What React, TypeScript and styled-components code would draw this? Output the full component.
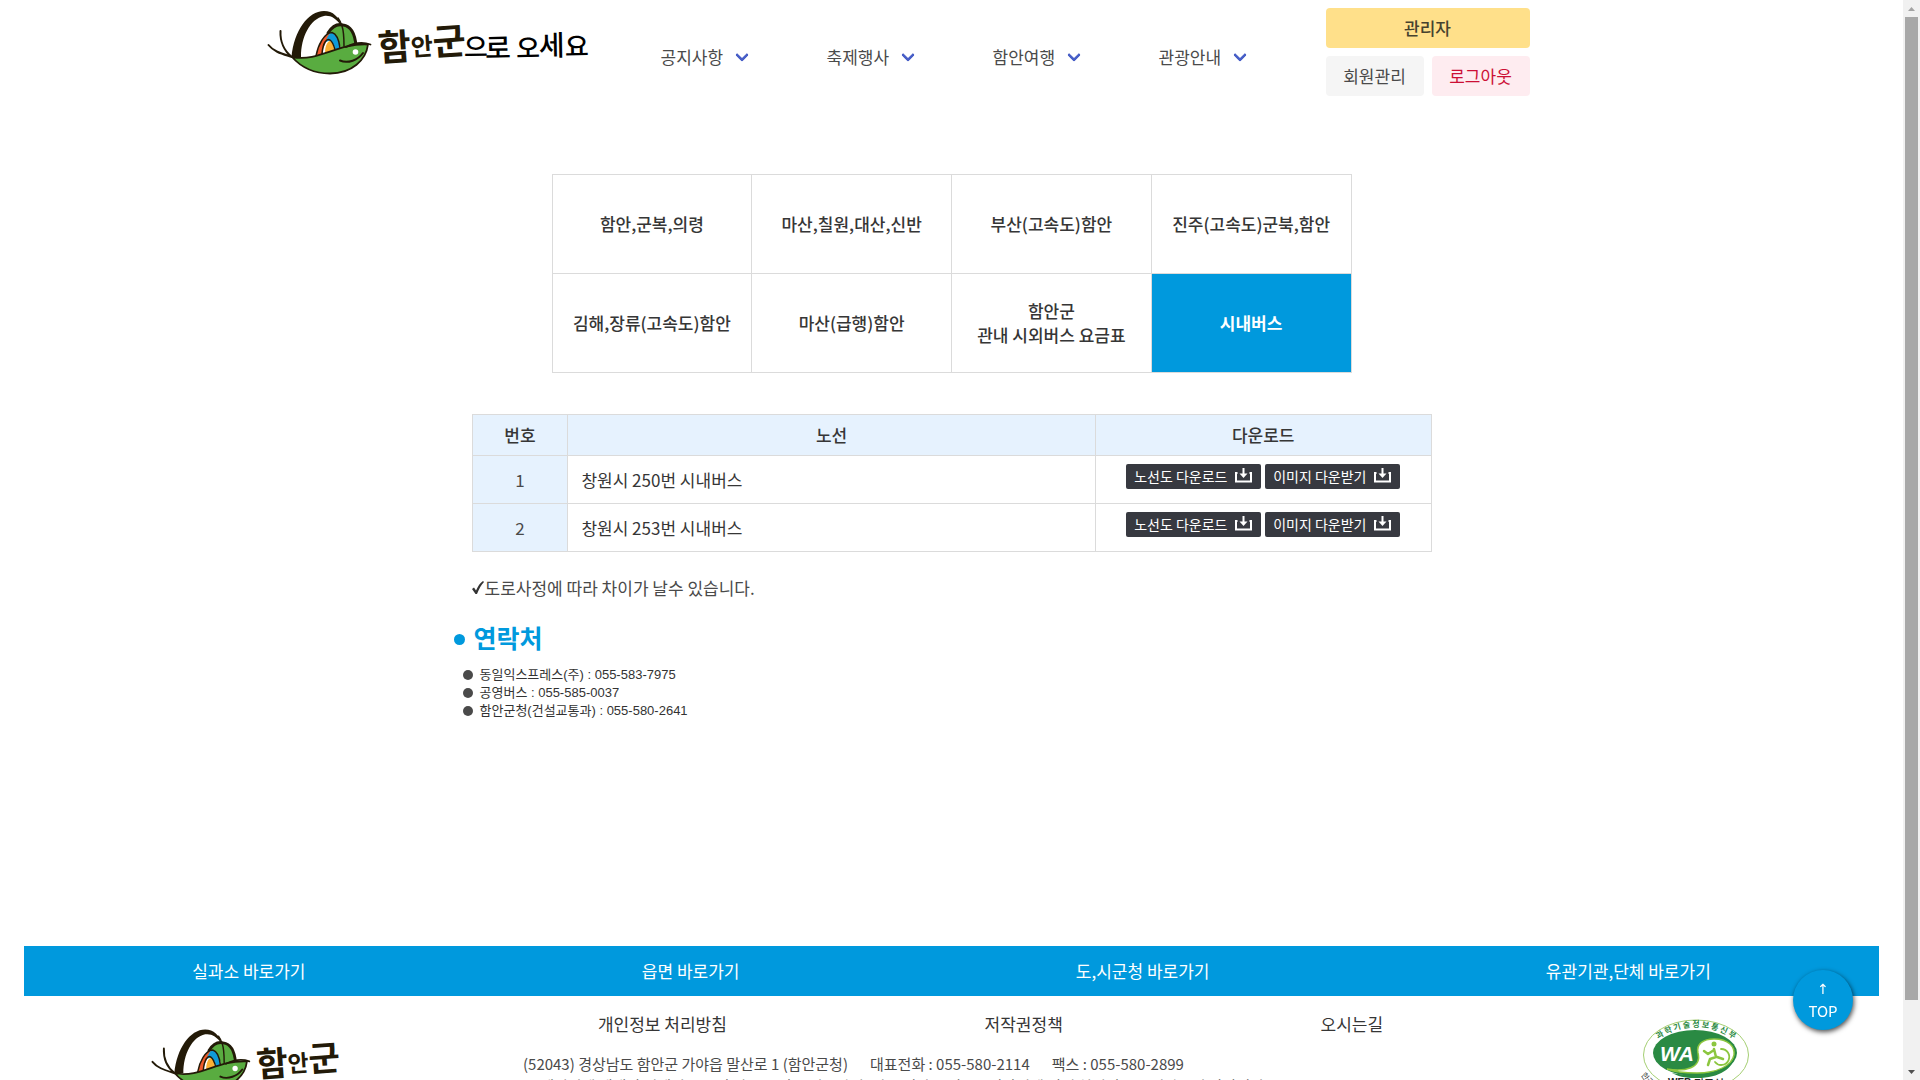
import React from 'react';
import styled, { createGlobalStyle } from 'styled-components';

const BLUE = '#0099dd';
const SANS = '"Noto Sans CJK KR", "Open Sans", sans-serif';

const GlobalStyle = createGlobalStyle`
  * { box-sizing: border-box; margin: 0; padding: 0; }
  html, body, #root { height: 100%; }
  body { background: #fff; color: #4a4a4a; font-family: ${SANS}; font-size: 17px; line-height: 24px; overflow: hidden; }
  a { color: inherit; text-decoration: none; }
  ul { list-style: none; }
  button { font: inherit; border: 0; cursor: pointer; }
`;

const Frame = styled.div`
  display: grid;
  grid-template-columns: 1fr 17px;
  height: 100vh;
`;

const Page = styled.div`
  min-width: 0;
  overflow-y: auto;
  scrollbar-width: none;
  &::-webkit-scrollbar { display: none; }
`;

const ScrollTrack = styled.div`
  display: flex;
  flex-direction: column;
  align-items: center;
  background: #f1f1f1;
`;

const ScrollArrow = styled.svg`
  flex: none;
  width: 17px;
  height: 17px;
`;

const ScrollSpace = styled.div`
  flex: 1;
  width: 13px;
`;

const ScrollThumb = styled.div`
  height: 94%;
  background: #a8a8a8;
`;

const Header = styled.header`
  display: flex;
  align-items: flex-start;
  max-width: 1376px;
  margin: 0 auto;
`;

const HomeLink = styled.a`
  display: block;
  margin-right: 67px;
`;

const LogoSvg = styled.svg`
  display: block;
  overflow: visible;
`;

const Nav = styled.nav`
  display: flex;
  height: 114px;
  align-items: center;
`;

const NavLink = styled.a`
  display: flex;
  align-items: center;
  gap: 14px;
  width: 166px;
`;

const Chevron = styled.span`
  width: 10px;
  height: 10px;
  margin-top: -4px;
  border: solid #485fc7;
  border-width: 0 3px 3px 0;
  border-radius: 2px;
  transform: rotate(45deg);
`;

const Account = styled.div`
  display: grid;
  grid-template-columns: 98px 98px;
  gap: 8px;
  padding: 8px 0 0 1px;
`;

const AccountButton = styled.button<{ $bg: string; $fg: string; $wide?: boolean }>`
  grid-column: ${(p) => (p.$wide ? 'span 2' : 'auto')};
  height: 40px;
  border-radius: 4px;
  background: ${(p) => p.$bg};
  color: ${(p) => p.$fg};
  font-weight: ${(p) => (p.$wide ? 500 : 400)};
`;

const Main = styled.main`
  max-width: 1000px;
  margin: 0 auto;
  padding: 60px 0 226px;
`;

const Tabs = styled.nav`
  display: grid;
  grid-template-columns: repeat(4, 1fr);
  grid-auto-rows: 99px;
  max-width: 800px;
  margin: 0 auto 41px;
  border-top: 1px solid #dbdbdb;
  border-left: 1px solid #dbdbdb;
`;

const Tab = styled.a<{ $active?: boolean }>`
  display: flex;
  align-items: center;
  justify-content: center;
  text-align: center;
  white-space: pre-line;
  border-right: 1px solid #dbdbdb;
  border-bottom: 1px solid #dbdbdb;
  font-weight: ${(p) => (p.$active ? 700 : 500)};
  color: ${(p) => (p.$active ? '#fff' : '#363636')};
  background: ${(p) => (p.$active ? BLUE : '#fff')};
`;

const Routes = styled.table`
  width: 96%;
  margin: 0 auto;
  border-collapse: collapse;
  table-layout: fixed;
  th, td { border: 1px solid #dbdbdb; }
`;

const HeadCell = styled.th<{ $width: string }>`
  width: ${(p) => p.$width};
  height: 41px;
  background: #e6f2fe;
  color: #363636;
  font-weight: 500;
`;

const NumberCell = styled.td`
  height: 48px;
  background: #e6f2fe;
  text-align: center;
`;

const RouteCell = styled.td`
  padding: 0 13px;
  color: #363636;
`;

const Downloads = styled.div`
  display: flex;
  justify-content: center;
  gap: 4px;
  padding-bottom: 6px;
`;

const DownloadButton = styled.button`
  display: flex;
  align-items: center;
  justify-content: space-between;
  width: 135px;
  height: 25px;
  padding: 0 9px 2px 8px;
  border-radius: 2px;
  background: #373940;
  color: #fff;
  font-size: 14px;
  white-space: nowrap;
`;

const Notice = styled.p`
  display: flex;
  align-items: center;
  gap: 1px;
  padding: 24px 20px 23px;
`;

const ContactTitle = styled.h2`
  display: flex;
  align-items: center;
  gap: 9px;
  padding-left: 2px;
  line-height: 28px;
  font-size: 25px;
  font-weight: 700;
  color: ${BLUE};
  &::before {
    content: '';
    width: 11px;
    height: 11px;
    margin-top: 4px;
    border-radius: 50%;
    background: ${BLUE};
  }
`;

const Contacts = styled.ul`
  padding: 15px 0 0 11px;
`;

const Contact = styled.li`
  display: flex;
  align-items: center;
  gap: 7px;
  font: 13px/18px "Liberation Sans", ${SANS};
  color: #333;
  &::before {
    content: '';
    width: 10px;
    height: 10px;
    border-radius: 50%;
    background: #4a4a4a;
  }
`;

const Footer = styled.footer`
  padding: 0 24px 60px;
`;

const Shortcuts = styled.nav`
  display: flex;
  justify-content: space-around;
  align-items: center;
  height: 50px;
  background: ${BLUE};
  color: #fff;
`;

const FooterBody = styled.div`
  display: grid;
  grid-template-columns: 445fr 1043fr 367fr;
`;

const FooterSide = styled.div`
  display: flex;
  justify-content: center;
  align-items: flex-start;
  padding-top: 23px;
`;

const Policies = styled.nav`
  display: flex;
  justify-content: space-around;
  padding-top: 16px;
  color: #363636;
`;

const Address = styled.address`
  padding: 17px 0 0 54px;
  font-size: 15px;
  line-height: 22px;
  font-style: normal;
`;

const AddressLine = styled.p`
  display: flex;
  gap: 22px;
  white-space: nowrap;
`;

const TopButton = styled.button`
  position: fixed;
  right: 67px;
  bottom: 50px;
  width: 60px;
  height: 60px;
  border-radius: 50%;
  background: ${BLUE};
  color: #fff;
  font-size: 15px;
  line-height: 22px;
  box-shadow: 1px 2px 5px rgba(0, 0, 0, 0.7);
`;

const Arrow = styled.span`
  display: block;
  font: 14px/22px "DejaVu Sans", sans-serif;
`;

const INK = '#231a08';

function Turtle() {
  return (
    <g strokeLinecap="round" strokeLinejoin="round">
      <path d="M31.500 57C34 31 48 11 64 11C73 11 79 17 81.500 26C76 18 70 15 64 16C50 19 41 37 41 57Z" fill={INK} />
      <path d="M78 18C81 22 83 29 83 35" fill="none" stroke={INK} strokeWidth="1.500" />
      <path d="M68 33C73 25 79 24 83 25C91 26 95 34 96 46L81 50C80 42 77 34 68 33Z" fill="#59ac40" />
      <path d="M68 33C73 25 79 24 83 25C91 26 95 34 96 46" fill="none" stroke={INK} strokeWidth="3" />
      <path d="M82 26C84 32 84 38 84 46" fill="none" stroke={INK} strokeWidth="1.500" />
      <path d="M56 56C58 45 63 35 70 33L66 42C64 46 62 50 62 54Z" fill="#ee5a2b" />
      <path d="M66 41C68 34 71 32 73 33C77 35 79 40 80 48L75 50C74 43 71 39 66 42Z" fill="#0f9ad8" />
      <path d="M65 53C65 45 68 41 70 41C73 42 74 46 74 51Z" fill="#fbb034" />
      <path d="M56 56C58 45 64 33 72 32.500C77 34 79 40 80 48M62 54C63 42 67 38 70 40C73 42 74 46 75 50" fill="none" stroke={INK} strokeWidth="1.500" />
      <path d="M32 57C60 62 76 43 108 44.500C106 60 92 73.500 70 73.500C52 73.500 40 66 32 57Z" fill="#59ac40" stroke={INK} strokeWidth="1.800" />
      <path d="M86 47C94 43 103 42 110.500 44.500" fill="none" stroke={INK} strokeWidth="1.800" />
      <path d="M80 60.500C88 64 98 60 103 53" fill="none" stroke={INK} strokeWidth="2" />
      <circle cx="95.500" cy="52" r="2.800" fill="#fff" />
      <path d="M8.500 45C14 52 23 54 32 57M20.500 31C20 41 24 51 32 57" fill="none" stroke={INK} strokeWidth="2" />
    </g>
  );
}

function Logo({ full }: { full?: boolean }) {
  return (
    <LogoSvg
      viewBox={full ? '4 0 330 84' : '8 0 199 84'}
      width={full ? 330 : 189}
      height={full ? 84 : 80}
      role="img"
      aria-label={full ? '함안군으로 오세요' : '함안군'}
    >
      <Turtle />
      <g fontFamily='"Noto Sans CJK KR", sans-serif' fontWeight="700" fill={INK}>
        <text transform="rotate(-4 136 50)">
          <tspan x="118" y="60" fontSize="36">함</tspan>
          <tspan x="151" y="57" fontSize="24">안</tspan>
          <tspan x="173" y="58" fontSize="36">군</tspan>
        </text>
        {full && (
          <text fill="#000" fontWeight="500" transform="rotate(-1 260 50)">
            <tspan x="204" y="56" fontSize="26">으</tspan>
            <tspan x="225" y="58" fontSize="28">로</tspan>
            <tspan x="256" y="58" fontSize="26">오</tspan>
            <tspan x="279" y="56" fontSize="28">세</tspan>
            <tspan x="305" y="57" fontSize="26">요</tspan>
          </text>
        )}
      </g>
    </LogoSvg>
  );
}

function DownloadIcon() {
  return (
    <svg width="17" height="15" viewBox="0 0 17 15" fill="none" stroke="#fff" aria-hidden="true">
      <path d="M2.500 5H1V13.500H16V5H14.500" strokeWidth="2" />
      <path d="M8.500 0V7" strokeWidth="2" />
      <path d="M4.500 5.500H12.500L8.500 10Z" fill="#fff" stroke="none" />
    </svg>
  );
}

function WebAccessibilityMark() {
  return (
    <svg width="114" height="76" viewBox="0 0 114 76" role="img" aria-label="WA 웹 접근성 인증마크">
      <defs>
        <path id="mark-top" d="M16 22Q57 -6 98 22" />
        <path id="mark-left" d="M2 56Q10 69 26 77" />
        <path id="mark-right" d="M88 77Q104 70 113 55" />
      </defs>
      <ellipse cx="57" cy="36" rx="52.500" ry="35" fill="#fff" stroke="#a5cf73" />
      <ellipse cx="56" cy="34" rx="42" ry="23" fill="#2a8a43" />
      <path d="M59 34C57 25 64 20 75 20C90 20 96 28 95 36C93 47 78 54 58 54C46 54 36 53 28 50C46 53 63 49 59 34Z" fill="#fff" stroke="#8cc63f" strokeWidth="1.500" />
      <path d="M33 54C56 59 92 54 96 36C95 50 78 60 56 59C46 59 38 57 33 54Z" fill="#2a8a43" />
      <circle cx="75" cy="25" r="2.500" fill="#8cc63f" />
      <g fill="none" stroke="#8cc63f" strokeWidth="2.500" strokeLinecap="round" strokeLinejoin="round">
        <path d="M75 30L77 38L71 40L69 46M65 32L69 35L75 31M78 38L84 40" />
        <path d="M82 30A8 8 0 1 1 76 43" strokeWidth="1.800" />
      </g>
      <text x="21" y="42" fontFamily='"Liberation Sans", sans-serif' fontSize="21" fontWeight="700" fontStyle="italic" fill="#fff">WA</text>
      <text fontFamily='"Noto Sans CJK KR", sans-serif' fontSize="8" fontWeight="700" fill="#2a8a43">
        <textPath href="#mark-top" startOffset="50%" textAnchor="middle">과 학 기 술 정 보 통 신 부</textPath>
      </text>
      <text fontFamily='"Noto Sans CJK KR", sans-serif' fontSize="8" fill="#333">
        <textPath href="#mark-left">한국웹</textPath>
      </text>
      <text fontFamily='"Noto Sans CJK KR", sans-serif' fontSize="8" fill="#333">
        <textPath href="#mark-right">2030</textPath>
      </text>
      <text x="57" y="67" textAnchor="middle" fontFamily='"Liberation Sans", sans-serif' fontSize="10" fontWeight="700" fill="#222">WEB 접근성</text>
    </svg>
  );
}

const menu = ['공지사항', '축제행사', '함안여행', '관광안내'];
const tabs = [
  '함안,군복,의령',
  '마산,칠원,대산,신반',
  '부산(고속도)함안',
  '진주(고속도)군북,함안',
  '김해,장류(고속도)함안',
  '마산(급행)함안',
  '함안군\n관내 시외버스 요금표',
  '시내버스',
];
const routes = ['창원시 250번 시내버스', '창원시 253번 시내버스'];
const contacts = [
  '동일익스프레스(주) : 055-583-7975',
  '공영버스 : 055-585-0037',
  '함안군청(건설교통과) : 055-580-2641',
];
const shortcuts = ['실과소 바로가기', '읍면 바로가기', '도,시군청 바로가기', '유관기관,단체 바로가기'];
const policies = ['개인정보 처리방침', '저작권정책', '오시는길'];

export default function App() {
  return (
    <>
      <GlobalStyle />
      <Frame>
        <Page>
          <Header>
            <HomeLink href="#">
              <Logo full />
            </HomeLink>
            <Nav>
              {menu.map((m) => (
                <NavLink href="#" key={m}>
                  {m}
                  <Chevron />
                </NavLink>
              ))}
            </Nav>
            <Account>
              <AccountButton $wide $bg="#ffe08a" $fg="#46422f">관리자</AccountButton>
              <AccountButton $bg="#f5f5f5" $fg="#4a4a4a">회원관리</AccountButton>
              <AccountButton $bg="#feecf0" $fg="#cc0f35">로그아웃</AccountButton>
            </Account>
          </Header>

          <Main>
            <Tabs>
              {tabs.map((t) => (
                <Tab href="#" key={t} $active={t === '시내버스'}>{t}</Tab>
              ))}
            </Tabs>

            <Routes>
              <thead>
                <tr>
                  <HeadCell $width="10%">번호</HeadCell>
                  <HeadCell $width="55%">노선</HeadCell>
                  <HeadCell $width="35%">다운로드</HeadCell>
                </tr>
              </thead>
              <tbody>
                {routes.map((r, i) => (
                  <tr key={r}>
                    <NumberCell>{i + 1}</NumberCell>
                    <RouteCell>{r}</RouteCell>
                    <td>
                      <Downloads>
                        <DownloadButton>노선도 다운로드<DownloadIcon /></DownloadButton>
                        <DownloadButton>이미지 다운받기<DownloadIcon /></DownloadButton>
                      </Downloads>
                    </td>
                  </tr>
                ))}
              </tbody>
            </Routes>

            <Notice>
              <svg width="12" height="14" viewBox="0 0 12 14" aria-hidden="true">
                <path d="M0 8L2 6.500L4 9.500C6 5 8 2 11 0L12 1C9 4 7 8 5 13H3.500Z" fill="#333" />
              </svg>
              도로사정에 따라 차이가 날수 있습니다.
            </Notice>

            <ContactTitle>연락처</ContactTitle>
            <Contacts>
              {contacts.map((c) => (
                <Contact key={c}>{c}</Contact>
              ))}
            </Contacts>
          </Main>

          <Footer>
            <Shortcuts>
              {shortcuts.map((s) => (
                <a href="#" key={s}>{s}</a>
              ))}
            </Shortcuts>
            <FooterBody>
              <FooterSide>
                <Logo />
              </FooterSide>
              <div>
                <Policies>
                  {policies.map((p) => (
                    <a href="#" key={p}>{p}</a>
                  ))}
                </Policies>
                <Address>
                  <AddressLine>
                    <span>(52043) 경상남도 함안군 가야읍 말산로 1 (함안군청)</span>
                    <span>대표전화 : 055-580-2114</span>
                    <span>팩스 : 055-580-2899</span>
                  </AddressLine>
                  <AddressLine>
                    본 페이지에 게재된 이메일 주소의 자동 수집을 거부하며, 이를 위반시 정보통신망법에 의해 처벌됨을 유념하시기 바랍니다.
                  </AddressLine>
                </Address>
              </div>
              <FooterSide>
                <WebAccessibilityMark />
              </FooterSide>
            </FooterBody>
          </Footer>
        </Page>

        <ScrollTrack aria-hidden="true">
          <ScrollArrow viewBox="0 0 17 17"><path d="M5 11L8.500 7L12 11Z" fill="#a3a3a3" /></ScrollArrow>
          <ScrollSpace><ScrollThumb /></ScrollSpace>
          <ScrollArrow viewBox="0 0 17 17"><path d="M5 7L8.500 11L12 7Z" fill="#505050" /></ScrollArrow>
        </ScrollTrack>
      </Frame>
      <TopButton>
        <Arrow>↑</Arrow>
        TOP
      </TopButton>
    </>
  );
}
